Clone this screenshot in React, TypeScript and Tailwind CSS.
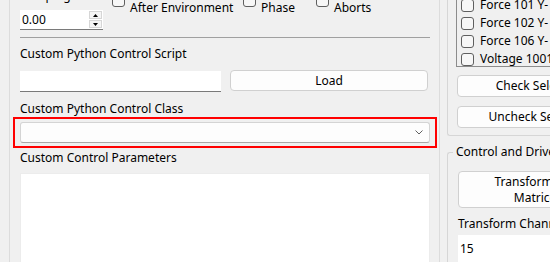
import React from "react";

const font = { fontFamily: '"Noto Sans", "Liberation Sans", sans-serif' };

function Box() {
  return (
    <div className="w-[13px] h-[13px] shrink-0 rounded-[3px] border border-[#5f5f5f] bg-[#f7f7f7]" />
  );
}

function TopCheck({ l1, l2, w }: { l1: string; l2: string; w: string }) {
  return (
    <div className={`flex items-center gap-[5px] ${w}`}>
      <Box />
      <div className="leading-[16px] whitespace-nowrap">
        <div>{l1}</div>
        <div>{l2}</div>
      </div>
    </div>
  );
}

function ListRow({ t }: { t: string }) {
  return (
    <div className="h-[18px] flex items-center gap-[6px] pl-[4px] whitespace-nowrap">
      <Box />
      <span>{t}</span>
    </div>
  );
}

export default function App() {
  return (
    <div
      className="w-[550px] h-[262px] overflow-hidden bg-[#f0f0f0] text-[12px] leading-[16px] text-black flex"
      style={font}
    >
      <div className="w-[9px] shrink-0" />
      {/* Left panel */}
      <div className="w-[431px] shrink-0 h-full border-x border-[#dcdcdc] pl-[10px] pr-[9px] flex flex-col">
        {/* top controls */}
        <div className="h-[37px] shrink-0">
          <div className="flex items-start -mt-[16px]">
            <div className="w-[92px] shrink-0 mt-[4px]">
              <div className="leading-[16px]">Ramping</div>
              <div className="mt-[6px] w-[83px] h-[20px] bg-white border-b border-[#7a7a7a] flex items-center justify-between pl-[2px] pr-[1px]">
                <span>0.00</span>
                <div className="flex flex-col gap-[1px]">
                  <div className="w-[13px] h-[8px] bg-[#f5f5f5] border border-[#d6d6d6] flex items-center justify-center">
                    <svg width="5" height="3" viewBox="0 0 5 3"><path d="M2.5 0L5 3H0z" fill="#000" /></svg>
                  </div>
                  <div className="w-[13px] h-[8px] bg-[#f5f5f5] border border-[#d6d6d6] flex items-center justify-center">
                    <svg width="5" height="3" viewBox="0 0 5 3"><path d="M0 0h5L2.5 3z" fill="#000" /></svg>
                  </div>
                </div>
              </div>
            </div>
            <TopCheck l1="Update Parameters" l2="After Environment" w="w-[131px]" />
            <TopCheck l1="Reset" l2="Phase" w="w-[73px]" />
            <TopCheck l1="Stop on" l2="Aborts" w="w-[80px]" />
          </div>
        </div>
        <div className="h-[1px] bg-[#a0a0a0] shrink-0" />
        <div className="mt-[8px] h-[16px] shrink-0">Custom Python Control Script</div>
        <div className="mt-[8px] flex gap-[9px] items-start shrink-0">
          <div className="w-[201px] h-[21px] mt-[1px] bg-white border-b border-[#7a7a7a]" />
          <button className="w-[198px] h-[21px] rounded-[4px] border border-[#d0d0d0] bg-[#fdfdfd] leading-[19px] text-center">
            Load
          </button>
        </div>
        <div className="mt-[9px] h-[16px] shrink-0">Custom Python Control Class</div>
        <div className="-ml-[7px] -mr-[7px] h-[31px] shrink-0 border-2 border-[#ff0000] px-[5px] pt-[3px]">
          <div className="h-[21px] bg-[#fdfdfd] border border-[#d4d4d4] border-b-[#a8a8a8] rounded-[3px] flex items-center justify-end pr-[6px]">
            <svg width="8" height="5" viewBox="0 0 8 5">
              <path d="M0.5 0.5L4 4L7.5 0.5" fill="none" stroke="#606060" strokeWidth="1" />
            </svg>
          </div>
        </div>
        <div className="mt-[2px] h-[16px] shrink-0">Custom Control Parameters</div>
        <div className="mt-[7px] flex-1 bg-white border border-[#ececec] border-b-0" />
      </div>
      <div className="w-[7px] shrink-0" />
      {/* Right panel */}
      <div className="w-[180px] shrink-0 h-full flex flex-col">
        <div className="h-[136px] shrink-0 border-l border-b border-[#d6d6d6] rounded-bl-[3px] pl-[8px] flex flex-col">
          <div className="h-[67px] border-l border-b border-[#8c8c8c] overflow-hidden">
            <div className="-mt-[4px]">
              <ListRow t="Force 101 Y-" />
              <ListRow t="Force 102 Y-" />
              <ListRow t="Force 106 Y-" />
              <ListRow t="Voltage 1001" />
            </div>
          </div>
          <button className="mt-[8px] ml-[1px] w-[162px] h-[22px] rounded-[4px] border border-[#d0d0d0] bg-[#fdfdfd] text-center">
            Check Selected
          </button>
          <button className="mt-[9px] ml-[1px] w-[162px] h-[22px] rounded-[4px] border border-[#d0d0d0] bg-[#fdfdfd] text-center">
            Uncheck Selected
          </button>
        </div>
        <div className="mt-[16px] flex-1 border-l border-t border-[#d6d6d6] rounded-tl-[3px] pl-[10px] relative">
          <div className="absolute -top-[9px] left-[5px] px-[3px] bg-[#f0f0f0] leading-[16px]">
            Control and Drive
          </div>
          <button className="mt-[18px] w-[160px] h-[37px] rounded-[4px] border border-[#d0d0d0] bg-[#fdfdfd] leading-[16px] text-center">
            Transformation
            <br />
            Matrices
          </button>
          <div className="mt-[8px] h-[16px]">Transform Channels</div>
          <div className="mt-[3px] w-[160px] h-[30px] bg-white pl-[2px] pt-[6px]">15</div>
        </div>
      </div>
    </div>
  );
}
